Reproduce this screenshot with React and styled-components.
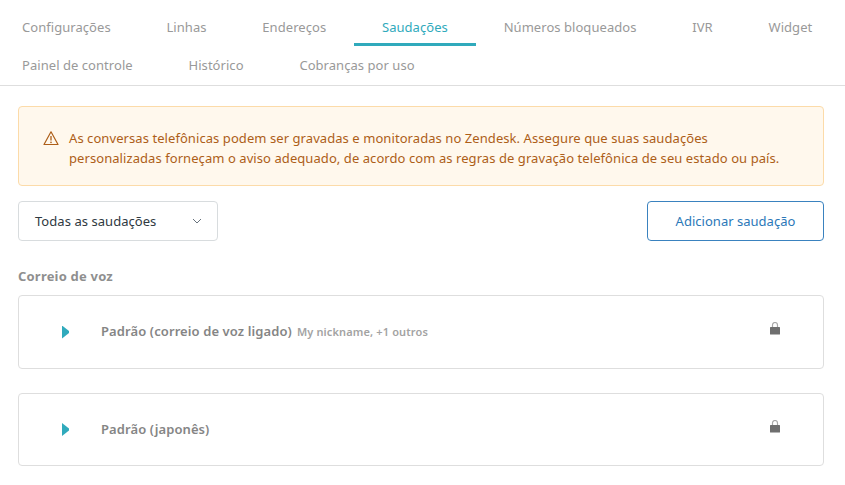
import React from 'react';
import styled, { createGlobalStyle } from 'styled-components';

const Global = createGlobalStyle`
  html, body { margin: 0; padding: 0; background: #fff; }
  body { font-family: "Noto Sans", "Open Sans", sans-serif; }
`;

const Page = styled.div`
  width: 845px;
  height: 485px;
  overflow: hidden;
`;

const Tabs = styled.nav`
  height: 86px;
  box-sizing: border-box;
  border-bottom: 1px solid #dedede;
  padding: 8px 0 0 22px;
`;

const TabRow = styled.div`
  display: flex;
  height: ${props => props.height}px;
  gap: 55.8px;
`;

const Tab = styled.a`
  position: relative;
  font-size: 13px;
  line-height: 38px;
  letter-spacing: 0.05px;
  color: ${props => (props.active ? '#30aabc' : '#999')};
  white-space: nowrap;

  ${props => props.active && `
    &::after {
      content: '';
      position: absolute;
      left: -28px;
      right: -28px;
      bottom: 0;
      height: 3px;
      background: #30aabc;
    }
  `}
`;

const Content = styled.main`
  padding: 20px 21px 0 18px;
`;

const Notice = styled.div`
  display: flex;
  height: 80px;
  box-sizing: border-box;
  padding: 21px 24px;
  gap: 10px;
  background: #fff8ed;
  border: 1px solid #fcdba9;
  border-radius: 4px;
  color: #ad5e18;
  font-size: 13px;
  line-height: 20px;
  letter-spacing: 0.07px;
`;

const NoticeIcon = styled.svg`
  flex: none;
  width: 16px;
  height: 16px;
  margin-top: 2px;
`;

const Toolbar = styled.div`
  display: flex;
  justify-content: space-between;
  margin-top: 15px;
`;

const Select = styled.div`
  display: flex;
  align-items: center;
  justify-content: space-between;
  width: 200px;
  height: 40px;
  box-sizing: border-box;
  padding: 0 14px 0 16px;
  border: 1px solid #d8dcde;
  border-radius: 4px;
  color: #2f3941;
  font-size: 13px;
  letter-spacing: 0.05px;
`;

const AddButton = styled.button`
  width: 177px;
  height: 40px;
  padding: 0;
  background: #fff;
  border: 1px solid #3a82bf;
  border-radius: 4px;
  color: #2b78b8;
  font: 13px "Noto Sans", "Open Sans", sans-serif;
  letter-spacing: 0.02px;
`;

const SectionTitle = styled.h3`
  margin: 25px 0 9px;
  font-size: 13px;
  line-height: 20px;
  font-weight: 700;
  letter-spacing: 0.2px;
  color: #8f8f8f;
`;

const Card = styled.div`
  display: flex;
  height: ${props => props.height}px;
  box-sizing: border-box;
  margin-bottom: 24px;
  padding: 0 43px;
  border: 1px solid #dedede;
  border-radius: 4px;
  align-items: center;
`;

const Caret = styled.span`
  flex: none;
  width: 7px;
  height: 13px;
  margin-right: 32px;
  background: #30aabc;
  clip-path: polygon(0 0, 100% 42%, 100% 58%, 0 100%);
`;

const CardTitle = styled.span`
  padding-bottom: 2px;
  font-size: 13px;
  font-weight: 600;
  letter-spacing: 0.1px;
  color: #858585;
`;

const CardMeta = styled.span`
  margin-left: 5px;
  padding-bottom: 2px;
  font-size: 11px;
  font-weight: 600;
  letter-spacing: 0.14px;
  color: #a3a3a3;
`;

const Lock = styled.svg`
  flex: none;
  align-self: flex-start;
  width: 10px;
  height: 13px;
  margin-left: auto;
  margin-top: 26px;
`;

const LockIcon = () => (
  <Lock viewBox="0 0 10 13">
    <path d="M2.5 6V3a2.5 2.5 0 0 1 5 0V6" fill="none" stroke="#a8a8a8" strokeWidth="1.2" />
    <rect x="0" y="5" width="10" height="7.5" rx="0.5" fill="#6f6f6f" />
  </Lock>
);

export default function App() {
  return (
    <Page>
      <Global />
      <Tabs>
        <TabRow height={38}>
          <Tab>Configurações</Tab>
          <Tab>Linhas</Tab>
          <Tab>Endereços</Tab>
          <Tab active>Saudações</Tab>
          <Tab>Números bloqueados</Tab>
          <Tab>IVR</Tab>
          <Tab>Widget</Tab>
        </TabRow>
        <TabRow height={39}>
          <Tab>Painel de controle</Tab>
          <Tab>Histórico</Tab>
          <Tab>Cobranças por uso</Tab>
        </TabRow>
      </Tabs>
      <Content>
        <Notice>
          <NoticeIcon viewBox="0 0 16 16">
            <path d="M8 1.8 L15 14.5 H1 Z" fill="none" stroke="#ad5e18" strokeWidth="1.2" strokeLinejoin="round" />
            <path d="M8 6v4.5" stroke="#ad5e18" strokeWidth="1.3" />
            <circle cx="8" cy="12.4" r="0.8" fill="#ad5e18" />
          </NoticeIcon>
          <div>
            As conversas telefônicas podem ser gravadas e monitoradas no Zendesk. Assegure que suas saudações<br />
            personalizadas forneçam o aviso adequado, de acordo com as regras de gravação telefônica de seu estado ou país.
          </div>
        </Notice>
        <Toolbar>
          <Select>
            Todas as saudações
            <svg width="12" height="12" viewBox="0 0 12 12">
              <path d="M2 4l4 4 4-4" fill="none" stroke="#68737d" strokeWidth="1" />
            </svg>
          </Select>
          <AddButton>Adicionar saudação</AddButton>
        </Toolbar>
        <SectionTitle>Correio de voz</SectionTitle>
        <Card height={74}>
          <Caret />
          <CardTitle>Padrão (correio de voz ligado)</CardTitle>
          <CardMeta>My nickname, +1 outros</CardMeta>
          <LockIcon />
        </Card>
        <Card height={73}>
          <Caret />
          <CardTitle>Padrão (japonês)</CardTitle>
          <LockIcon />
        </Card>
      </Content>
    </Page>
  );
}
